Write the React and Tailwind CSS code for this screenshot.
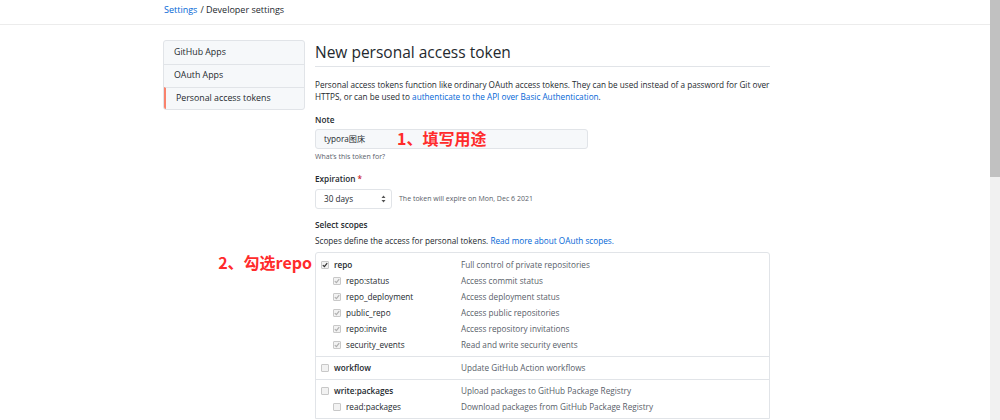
import React from 'react';

const font = { fontFamily: '"Open Sans", "Noto Sans CJK SC", sans-serif' };

const sideItems = ['GitHub Apps', 'OAuth Apps', 'Personal access tokens'];

// scope groups: first item is the parent, rest are children
const scopeGroups = [
  {
    checked: true,
    items: [
      ['repo', 'Full control of private repositories'],
      ['repo:status', 'Access commit status'],
      ['repo_deployment', 'Access deployment status'],
      ['public_repo', 'Access public repositories'],
      ['repo:invite', 'Access repository invitations'],
      ['security_events', 'Read and write security events'],
    ],
  },
  { checked: false, items: [['workflow', 'Update GitHub Action workflows']] },
  {
    checked: false,
    items: [
      ['write:packages', 'Upload packages to GitHub Package Registry'],
      ['read:packages', 'Download packages from GitHub Package Registry'],
    ],
  },
];

const Checkbox = ({ checked, muted }) => (
  <span className="flex h-[8px] w-[8px] shrink-0 items-center justify-center rounded-[1px] border border-[#c8c8c8] bg-[#f2f2f2]">
    {checked && (
      <svg width="6" height="6" viewBox="0 0 6 6">
        <path d="M0.8 3.1 L2.4 4.6 L5.2 1.2" fill="none" stroke={muted ? '#b0b0b0' : '#333'} strokeWidth="1.2" />
      </svg>
    )}
  </span>
);

const ScopeRow = ({ name, desc, checked, child }) => (
  <div className="flex h-[16px] items-center">
    <div className={`flex w-[145px] items-center gap-[5px] ${child ? 'pl-[17px]' : 'pl-[5px]'}`}>
      <Checkbox checked={checked} muted={child} />
      <span className={child ? 'text-[#24292e]' : 'font-semibold text-[#24292e]'}>{name}</span>
    </div>
    <span className="text-[#586069]">{desc}</span>
  </div>
);

export default function App() {
  return (
    <div className="flex h-[420px] w-[1000px] overflow-hidden bg-white text-[8.2px] text-[#24292e]" style={font}>
      <div className="flex-1">
        {/* breadcrumb */}
        <div className="flex h-[25px] items-start border-b border-[#ececec] pl-[164px] pt-[3px] text-[9px]">
          <a className="text-[#0366d6]">Settings</a>
          <span className="ml-[3px]">/ Developer settings</span>
        </div>

        <div className="flex gap-[10px] pl-[163px] pt-[15px]">
          {/* sidebar */}
          <nav className="h-[70px] w-[142px] overflow-hidden rounded-[3px] border border-[#e1e4e8] bg-[#f6f8fa] text-[8.8px]">
            {sideItems.map((item, i) => (
              <div
                key={item}
                className={`flex h-[23px] items-center pl-[10px] ${i > 0 ? 'border-t border-[#e1e4e8]' : ''} ${
                  i === 2 ? 'border-l-2 border-l-[#f9826c] pl-[8px]' : ''
                }`}
              >
                {item}
              </div>
            ))}
          </nav>

          {/* main */}
          <main className="w-[455px]">
            <h1 className="flex h-[27px] items-start border-b border-[#e1e4e8] text-[15.5px] leading-[24px]">
              New personal access token
            </h1>

            <p className="mt-[12px] whitespace-nowrap leading-[12px]">
              Personal access tokens function like ordinary OAuth access tokens. They can be used instead of a password for Git over
              <br />
              HTTPS, or can be used to <a className="text-[#0366d6]">authenticate to the API over Basic Authentication</a>.
            </p>

            <div className="mt-[11px] font-semibold leading-[12px]">Note</div>
            <div className="relative mt-[3px]">
              <div className="flex h-[20px] w-[273px] items-center rounded-[3px] border border-[#e1e4e8] bg-[#f6f8fa] pl-[8px]">
                typora图床
              </div>
              <span className="absolute left-[82px] top-[-3px] text-[16px] font-bold text-[#ff2b2b]" style={{ fontFamily: '"Noto Sans CJK SC", sans-serif' }}>
                1、填写用途
              </span>
            </div>
            <div className="mt-[3px] text-[7px] leading-[10px] text-[#586069]">What’s this token for?</div>

            <div className="mt-[11px] font-semibold leading-[12px]">
              Expiration <span className="text-[#cb2431]">*</span>
            </div>
            <div className="mt-[4px] flex items-center gap-[7px]">
              <div className="flex h-[20px] w-[77px] items-center justify-between rounded-[3px] border border-[#e1e4e8] bg-white pl-[8px] pr-[5px]">
                <span>30 days</span>
                <svg width="5" height="8" viewBox="0 0 5 8">
                  <path d="M2.5 0.5 L4.5 3 L0.5 3 Z M2.5 7.5 L4.5 5 L0.5 5 Z" fill="#555" />
                </svg>
              </div>
              <span className="text-[7px] text-[#586069]">The token will expire on Mon, Dec 6 2021</span>
            </div>

            <div className="mt-[10px] font-semibold leading-[12px]">Select scopes</div>
            <div className="mt-[4px] leading-[12px]">
              Scopes define the access for personal tokens. <a className="text-[#0366d6]">Read more about OAuth scopes.</a>
            </div>

            <div className="relative mt-[5px] rounded-t-[3px] border border-[#e1e4e8] bg-white">
              <span
                className="absolute right-[calc(100%+4px)] top-[-3px] whitespace-nowrap text-[16px] font-bold text-[#ff2b2b]"
                style={{ fontFamily: '"Noto Sans CJK SC", sans-serif' }}
              >
                2、勾选repo
              </span>
              {scopeGroups.map((g, gi) => (
                <div key={gi} className={`pb-[3px] ${gi > 0 ? 'border-t border-[#e1e4e8] pt-[3px]' : 'pt-[4px]'}`}>
                  {g.items.map(([name, desc], i) => (
                    <ScopeRow key={name} name={name} desc={desc} checked={g.checked} child={i > 0} />
                  ))}
                </div>
              ))}
            </div>
          </main>
        </div>
      </div>

      {/* scrollbar */}
      <div className="w-[10px] bg-[#f1f1f1]">
        <div className="h-[177px] bg-[#c1c1c1]" />
      </div>
    </div>
  );
}
